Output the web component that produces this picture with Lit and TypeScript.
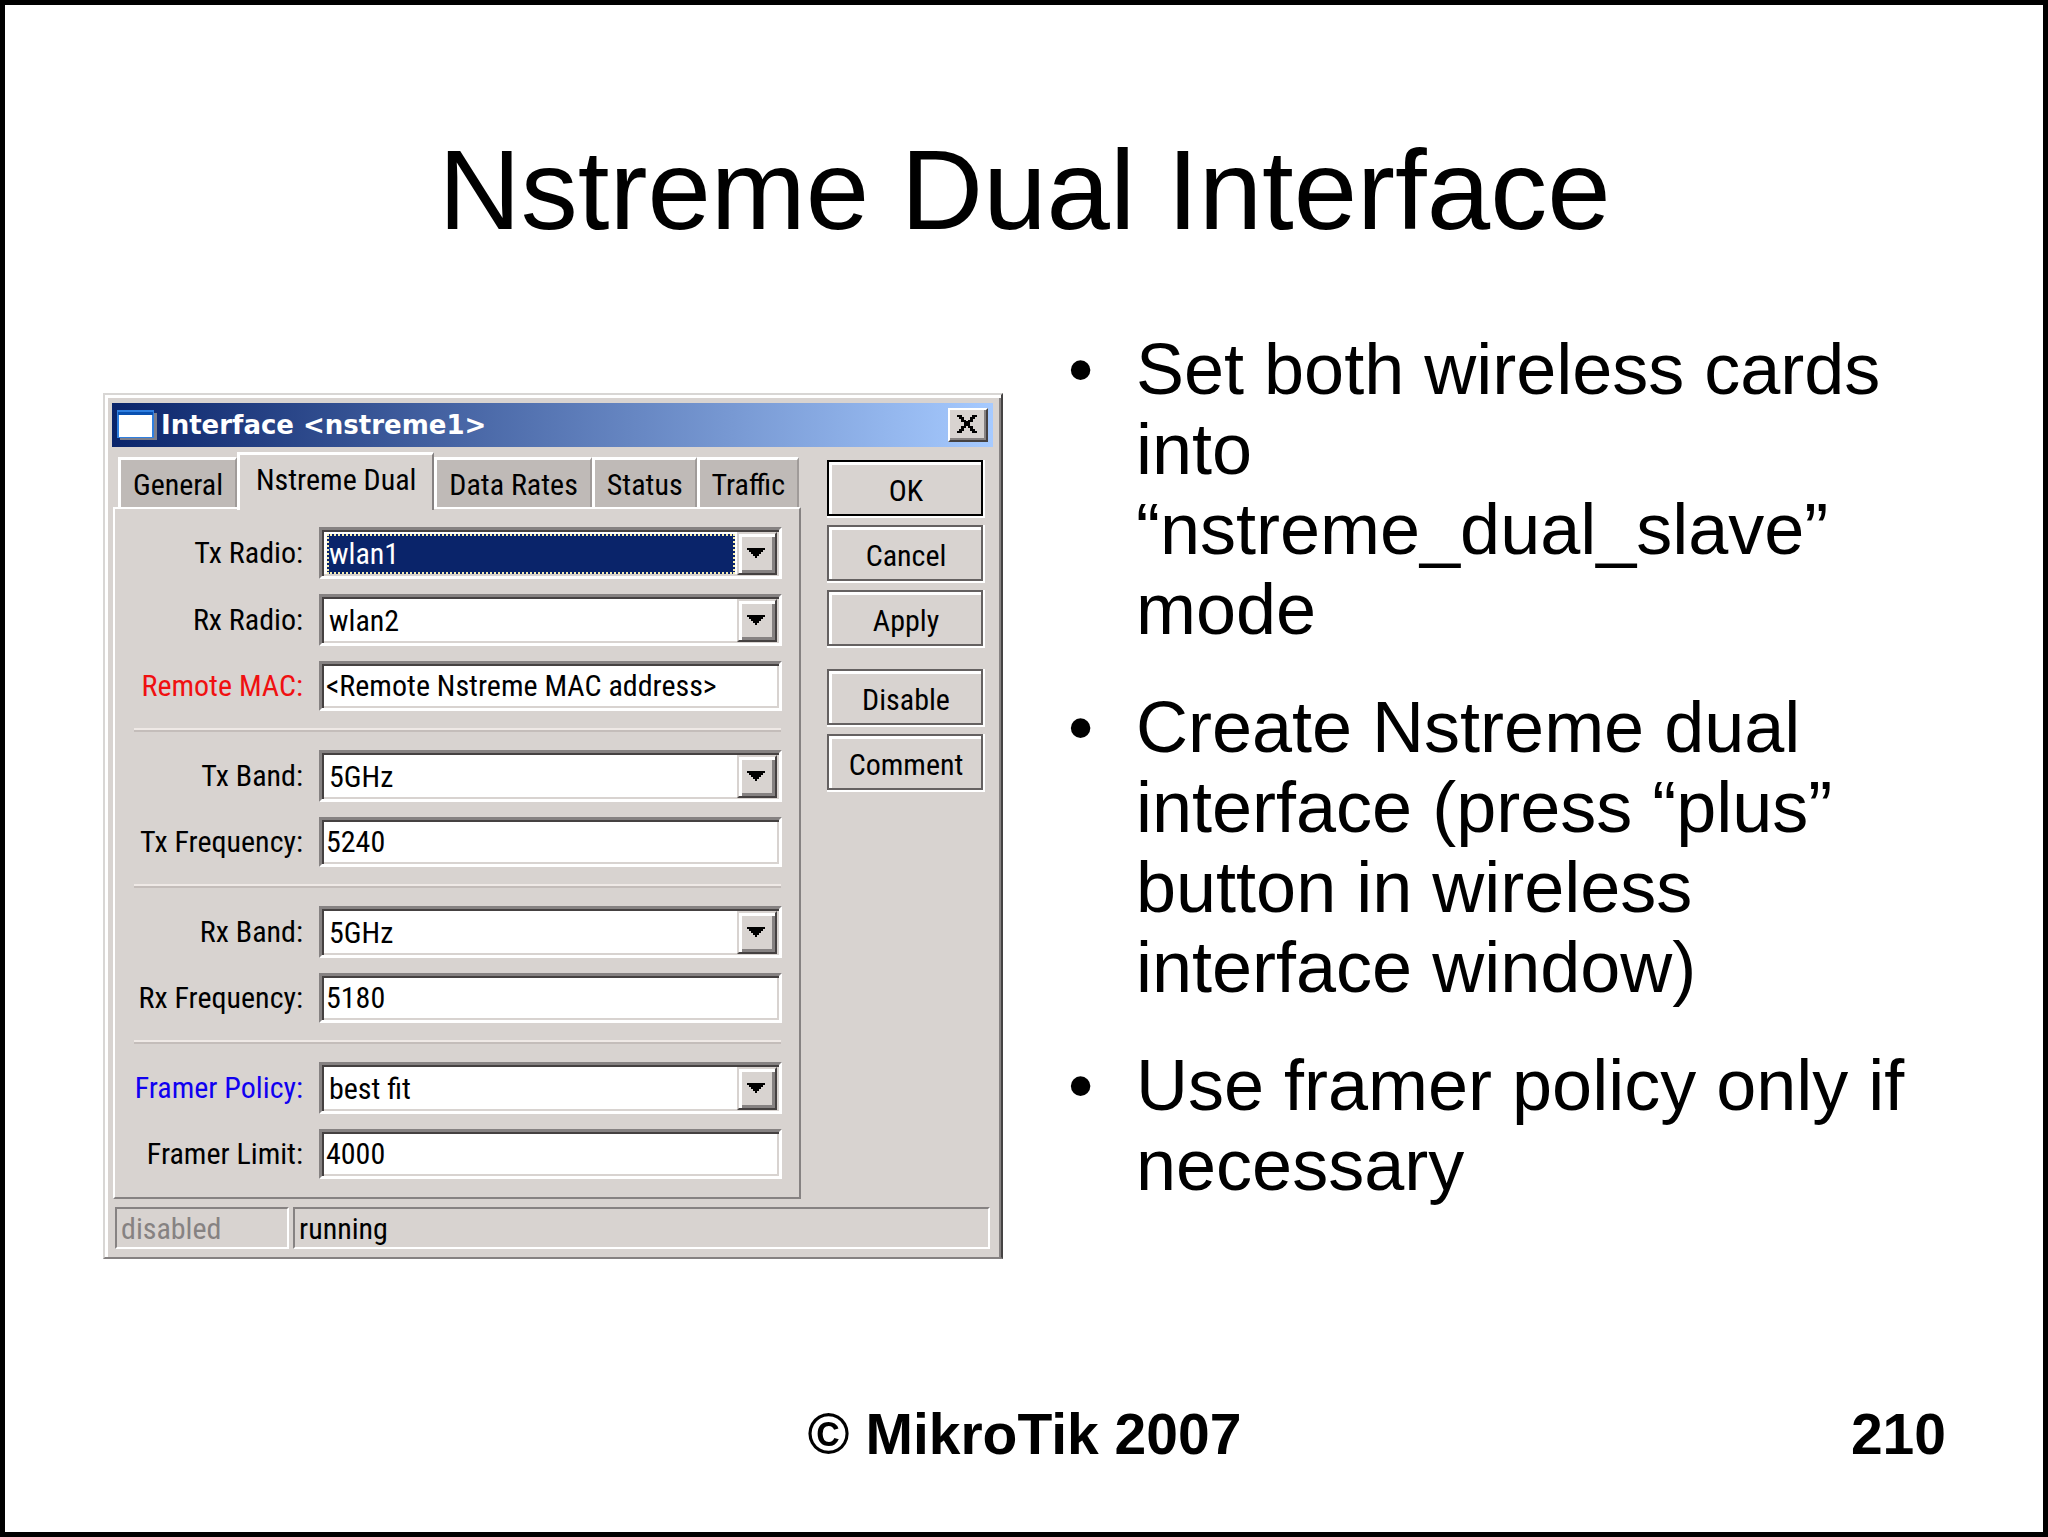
import { LitElement, html, css, nothing } from "lit";
import { customElement, property, state } from "lit/decorators.js";
import { classMap } from "lit/directives/class-map.js";

interface Field {
  id: string;
  label: string;
  value: string;
  options?: string[];
  tone?: "required" | "changed";
  selected?: boolean;
}

const GROUPS: Field[][] = [
  [
    { id: "tx-radio", label: "Tx Radio:", value: "wlan1", options: ["wlan1", "wlan2"], selected: true },
    { id: "rx-radio", label: "Rx Radio:", value: "wlan2", options: ["wlan1", "wlan2"] },
    { id: "remote-mac", label: "Remote MAC:", value: "<Remote Nstreme MAC address>", tone: "required" },
  ],
  [
    { id: "tx-band", label: "Tx Band:", value: "5GHz", options: ["5GHz"] },
    { id: "tx-frequency", label: "Tx Frequency:", value: "5240" },
  ],
  [
    { id: "rx-band", label: "Rx Band:", value: "5GHz", options: ["5GHz"] },
    { id: "rx-frequency", label: "Rx Frequency:", value: "5180" },
  ],
  [
    { id: "framer-policy", label: "Framer Policy:", value: "best fit", options: ["best fit"], tone: "changed" },
    { id: "framer-limit", label: "Framer Limit:", value: "4000" },
  ],
];

const TABS = ["General", "Nstreme Dual", "Data Rates", "Status", "Traffic"];
const ACTIONS = ["OK", "Cancel", "Apply", "Disable", "Comment"];

const POINTS = [
  "Set both wireless cards into “nstreme_dual_slave” mode",
  "Create Nstreme dual interface (press “plus” button in wireless interface window)",
  "Use framer policy only if necessary",
];

/** Sunken field row: right-aligned label plus a text box or a drop-down. */
@customElement("field-row")
export class FieldRow extends LitElement {
  @property({ attribute: false }) field!: Field;

  static styles = css`
    :host {
      display: grid;
      grid-template-columns: 188px minmax(0, 1fr);
      column-gap: 16px;
      align-items: center;
    }
    .label {
      text-align: right;
      white-space: nowrap;
    }
    .required {
      color: #f01010;
    }
    .changed {
      color: #1000f0;
    }
    .well {
      display: grid;
      box-sizing: border-box;
      height: 50px;
      background: #fff;
      border: 3px solid;
      border-color: #868282 #fff #fff #868282;
      box-shadow: inset 2px 2px #454141, inset -2px -2px #d8d3d0;
    }
    .drop {
      grid-template-columns: minmax(0, 1fr) 40px;
      height: 52px;
      padding: 4px 2px 3px 5px;
    }
    .box,
    .choice {
      min-width: 0;
      margin: 0;
      border: 0;
      outline: 0;
      background: none;
      color: #000;
      font: inherit;
      appearance: none;
    }
    .box {
      padding: 0 4px;
    }
    .choice {
      padding: 0;
      border: 2px dotted transparent;
      margin: 0 2px 0 0;
    }
    .selected {
      background: #0a246a;
      border-color: #f4ecae;
      color: #fff;
    }
    .arrow {
      display: grid;
      place-items: center;
      padding: 0 2px 2px 0;
      margin: -2px 0 -1px;
      box-sizing: border-box;
      background: #d8d3d0;
      border: 2px solid;
      border-color: #d8d3d0 #454141 #454141 #d8d3d0;
      box-shadow: inset 3px 3px #fff, inset -3px -3px #868282;
    }
  `;

  private open() {
    const select = this.renderRoot.querySelector("select") as any;
    select?.focus();
    select?.showPicker?.();
  }

  render() {
    const f = this.field;
    return html`
      <label class="label ${f.tone ?? ""}" for=${f.id}>${f.label}</label>
      ${f.options
        ? html`<div class="well drop">
            <select id=${f.id} class=${classMap({ choice: true, selected: !!f.selected })}>
              ${f.options.map((o) => html`<option ?selected=${o === f.value}>${o}</option>`)}
            </select>
            <span class="arrow" aria-hidden="true" @click=${this.open}>
              <svg width="18" height="10" viewBox="0 0 18 10">
                <path d="M0 0H18V2H16V4H14V6H12V8H10V10H8V8H6V6H4V4H2V2H0Z" />
              </svg>
            </span>
          </div>`
        : html`<div class="well"><input id=${f.id} class="box" type="text" .value=${f.value} /></div>`}
    `;
  }
}

/** The interface properties window. */
@customElement("interface-dialog")
export class InterfaceDialog extends LitElement {
  @state() private tab = "Nstreme Dual";

  static styles = css`
    :host {
      display: block;
      box-sizing: border-box;
      padding: 8px 8px 8px 7px;
      background: #d8d3d0;
      border: 2px solid;
      border-color: #d8d6d4 #454343 #858181 #d8d6d4;
      box-shadow: inset 3px 3px #fff, inset -2px 0 #868282;
      color: #000;
      font: 30px/36px "Roboto Condensed", "Liberation Sans Narrow", sans-serif;
    }
    .caption {
      display: flex;
      align-items: center;
      gap: 4px;
      height: 44px;
      padding: 0 5px;
      background: linear-gradient(90deg, #0a246a, #a6caff);
    }
    .name {
      flex: 1;
      margin: 0;
      color: #fff;
      font: bold 26px/36px "DejaVu Sans", sans-serif;
    }
    .close {
      display: grid;
      place-items: center;
      width: 40px;
      height: 34px;
      padding: 0 2px 2px 0;
      background: #d8d3d0;
      border: 2px solid;
      border-color: #fff #454141 #454141 #fff;
      box-shadow: inset -2px -2px #868282;
    }
    .body {
      display: grid;
      grid-template-columns: minmax(0, 1fr) 158px;
      column-gap: 26px;
      padding: 5px 8px 8px 1px;
    }
    .tabs {
      display: flex;
      align-items: flex-end;
      padding: 0 2px 0 5px;
    }
    .tab {
      flex: 1 1 auto;
      height: 50px;
      padding: 2px 7px 0;
      background: #bfbab7;
      border: solid;
      border-width: 3px 2px 0 3px;
      border-color: #fff #a09b99 #fff #fff;
      color: #000;
      font: inherit;
      white-space: nowrap;
    }
    .active {
      height: 58px;
      margin-bottom: -3px;
      padding: 0 11px 5px;
      background: #d8d3d0;
      border-right-color: #868282;
    }
    .panel {
      display: flex;
      flex-direction: column;
      gap: 15px;
      box-sizing: border-box;
      min-height: 692px;
      padding: 18px 17px 18px 0;
      border: 2px solid;
      border-color: #fff #868282 #868282 #fff;
    }
    .rule {
      height: 2px;
      margin: 2px 1px 3px 19px;
      border: 0;
      border-top: 2px solid #efe9e6;
      background: #c4bdba;
    }
    .actions {
      display: flex;
      flex-direction: column;
      gap: 7px;
      padding-top: 8px;
    }
    .action {
      height: 58px;
      padding: 4px 0 0;
      background: #d8d3d0;
      border: 0;
      box-shadow: inset -2px -2px #fff, inset 2px 2px #656161, inset -4px -4px #656161, inset 5px 5px #fff;
      color: #000;
      font: inherit;
    }
    .default {
      box-shadow: inset -2px -2px #fff, inset 2px 2px #000, inset -4px -4px #000, inset 5px 5px #fff;
    }
    .apart {
      margin-top: 14px;
    }
    .status {
      display: grid;
      grid-template-columns: 174px minmax(0, 1fr);
      column-gap: 4px;
      padding: 0 3px;
    }
    .cell {
      box-sizing: border-box;
      height: 42px;
      padding: 2px 4px 0;
      border: 2px solid;
      border-color: #868282 #fff #fff #868282;
    }
    .off {
      color: #868282;
    }
  `;

  render() {
    return html`
      <header class="caption">
        <svg width="40" height="30" viewBox="0 0 40 30" aria-hidden="true">
          <path d="M3 3H40V30H3Z" fill="#7c7f8c" />
          <path d="M0 0H37V28H0Z" fill="#2f7fe0" />
          <path d="M1 2H36V5H1Z" fill="#0a50b0" />
          <path d="M2 5H35V27H2Z" fill="#fff" />
        </svg>
        <h2 class="name">Interface &lt;nstreme1&gt;</h2>
        <button class="close" aria-label="Close">
          <svg width="20" height="18" viewBox="0 0 20 18" aria-hidden="true">
            <path
              d="M0 0H5V2H7V5H9V6H11V5H13V2H15V0H20V2H18V4H16V7H13V11H16V14H18V16H20V18H15V16H13V13H11V11H9V13H7V16H5V18H0V16H2V14H4V11H7V7H4V4H2V2H0Z"
            />
          </svg>
        </button>
      </header>
      <div class="body">
        <div>
          <div class="tabs" role="tablist">
            ${TABS.map(
              (t) => html`<button
                role="tab"
                aria-selected=${t === this.tab}
                class=${classMap({ tab: true, active: t === this.tab })}
                @click=${() => (this.tab = t)}
              >${t}</button>`,
            )}
          </div>
          <div class="panel" role="tabpanel">
            ${this.tab === "Nstreme Dual"
              ? GROUPS.map(
                  (group, i) => html`${i ? html`<hr class="rule" />` : nothing}
                    ${group.map((f) => html`<field-row .field=${f}></field-row>`)}`,
                )
              : nothing}
          </div>
        </div>
        <div class="actions">
          ${ACTIONS.map(
            (a) => html`<button
              class=${classMap({ action: true, default: a === "OK", apart: a === "Disable" })}
            >${a}</button>`,
          )}
        </div>
      </div>
      <footer class="status">
        <span class="cell off">disabled</span>
        <span class="cell">running</span>
      </footer>
    `;
  }
}

@customElement("app-root")
export class AppRoot extends LitElement {
  static styles = css`
    :host {
      display: flex;
      flex-direction: column;
      box-sizing: border-box;
      min-height: 100vh;
      padding: 120px 97px 66px 98px;
      border: 5px solid #000;
      background: #fff;
      color: #000;
      font-family: "Liberation Sans", sans-serif;
    }
    .title {
      margin: 0;
      font-size: 114px;
      line-height: 130px;
      font-weight: 400;
      text-align: center;
    }
    .content {
      display: grid;
      grid-template-columns: minmax(0, 900fr) minmax(0, 878fr);
      column-gap: 65px;
      align-items: start;
      padding-top: 74px;
    }
    .shot {
      margin-top: 64px;
    }
    .points {
      display: flex;
      flex-direction: column;
      gap: 38px;
      margin: 0;
      padding: 0;
      list-style: none;
      font-size: 72px;
      line-height: 80px;
    }
    .point {
      display: grid;
      grid-template-columns: 68px minmax(0, 1fr);
    }
    .point::before {
      content: "•";
    }
    .foot {
      display: grid;
      grid-template-columns: 1fr auto 1fr;
      margin-top: auto;
      font-size: 57px;
      line-height: 64px;
      font-weight: 700;
    }
    .owner {
      grid-column: 2;
    }
    .page {
      text-align: right;
    }
  `;

  render() {
    return html`
      <h1 class="title">Nstreme Dual Interface</h1>
      <main class="content">
        <interface-dialog class="shot"></interface-dialog>
        <ul class="points">
          ${POINTS.map((p) => html`<li class="point">${p}</li>`)}
        </ul>
      </main>
      <footer class="foot">
        <span class="owner">© MikroTik 2007</span>
        <span class="page">210</span>
      </footer>
    `;
  }
}
